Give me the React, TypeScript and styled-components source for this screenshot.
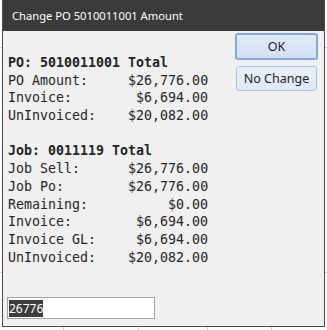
import * as React from 'react';
import styled, { createGlobalStyle } from 'styled-components';

const GlobalStyle = createGlobalStyle`
    html, body {
        margin: 0;
        padding: 0;
        width: 327px;
        height: 330px;
        overflow: hidden;
        background-color: #ffffff;
        background-image:
            linear-gradient(#d4d4d4, #d4d4d4),
            linear-gradient(#d4d4d4, #d4d4d4),
            linear-gradient(#d4d4d4, #d4d4d4),
            linear-gradient(#d4d4d4, #d4d4d4),
            linear-gradient(#d4d4d4, #d4d4d4),
            linear-gradient(#d4d4d4, #d4d4d4);
        background-size: 1px 330px, 1px 330px, 1px 330px, 1px 330px, 327px 1px, 327px 1px;
        background-position: 63px 0, 138px 0, 207px 0, 271px 0, 0 47px, 0 272px;
        background-repeat: no-repeat;
    }
`;

interface Row {
    label: string;
    value?: string;
}

const rows: Row[] = [
    { label: 'PO: 5010011001 Total' },
    { label: 'PO Amount:', value: '$26,776.00' },
    { label: 'Invoice:', value: '$6,694.00' },
    { label: 'UnInvoiced:', value: '$20,082.00' },
    { label: '' },
    { label: 'Job: 0011119 Total' },
    { label: 'Job Sell:', value: '$26,776.00' },
    { label: 'Job Po:', value: '$26,776.00' },
    { label: 'Remaining:', value: '$0.00' },
    { label: 'Invoice:', value: '$6,694.00' },
    { label: 'Invoice GL:', value: '$6,694.00' },
    { label: 'UnInvoiced:', value: '$20,082.00' },
];

const Window = styled.div`
    box-sizing: border-box;
    margin-left: 2px;
    width: 323px;
    height: 327px;
    border: 1px solid #4a4a4a;
    border-top: none;
    background: #f0f0f0;
    display: flex;
    flex-direction: column;
`;

const TitleBar = styled.div`
    height: 31px;
    flex-shrink: 0;
    background: #3b3b3b;
    color: #ffffff;
    font-family: 'Noto Sans', sans-serif;
    font-size: 11.2px;
    display: flex;
    align-items: center;
    padding-left: 9px;
`;

const Body = styled.div`
    display: flex;
    justify-content: space-between;
    padding: 0 6px 0 5px;
`;

const Summary = styled.div`
    margin-top: 23px;
    display: grid;
    grid-template-columns: 15ch 10ch;
    font-family: 'DejaVu Sans Mono', monospace;
    font-size: 13.3px;
    line-height: 17.7px;
    color: #262626;
    white-space: pre;
`;

const Label = styled.div<{ $title?: boolean }>`
    grid-column: ${(p) => (p.$title ? '1 / span 2' : '1')};
    font-weight: ${(p) => (p.$title ? 'bold' : 'normal')};
    height: 17.7px;
`;

const Value = styled.div`
    text-align: right;
`;

const Buttons = styled.div`
    margin-top: 2px;
    display: flex;
    flex-direction: column;
    align-items: center;
    gap: 6px;
`;

const Button = styled.button<{ $default?: boolean }>`
    box-sizing: border-box;
    width: ${(p) => (p.$default ? '83px' : '81px')};
    height: ${(p) => (p.$default ? '27px' : '25px')};
    border: ${(p) => (p.$default ? '2px solid #86a8de' : '1px solid #a9c0e4')};
    border-radius: 3px;
    background: ${(p) =>
        p.$default
            ? 'linear-gradient(#e0eaf9, #d3e1f6)'
            : 'linear-gradient(#e9f0fa, #dfe9f8)'};
    font-family: 'Noto Sans', sans-serif;
    font-size: 12.5px;
    color: #1e1e1e;
    padding: 0;
    cursor: default;
`;

const Field = styled.div`
    box-sizing: border-box;
    margin: auto 0 7px 4px;
    width: 148px;
    height: 22px;
    border: 1px solid #a2a2a2;
    background: #ffffff;
    padding: 1px 0 0 1px;
    display: flex;
    align-items: center;
    font-family: 'Noto Sans', sans-serif;
    font-size: 12px;
`;

const Selected = styled.span`
    background: #3c3c3c;
    color: #ffffff;
    line-height: 17px;
`;

export default function App(): JSX.Element {
    return (
        <>
            <GlobalStyle />
            <Window>
                <TitleBar>Change PO 5010011001 Amount</TitleBar>
                <Body>
                    <Summary>
                        {rows.map((r, i) =>
                            r.value === undefined ? (
                                <Label key={i} $title>
                                    {r.label}
                                </Label>
                            ) : (
                                <React.Fragment key={i}>
                                    <Label>{r.label}</Label>
                                    <Value>{r.value}</Value>
                                </React.Fragment>
                            ),
                        )}
                    </Summary>
                    <Buttons>
                        <Button type="button" $default>
                            OK
                        </Button>
                        <Button type="button">No Change</Button>
                    </Buttons>
                </Body>
                <Field>
                    <Selected>26776</Selected>
                </Field>
            </Window>
        </>
    );
}
